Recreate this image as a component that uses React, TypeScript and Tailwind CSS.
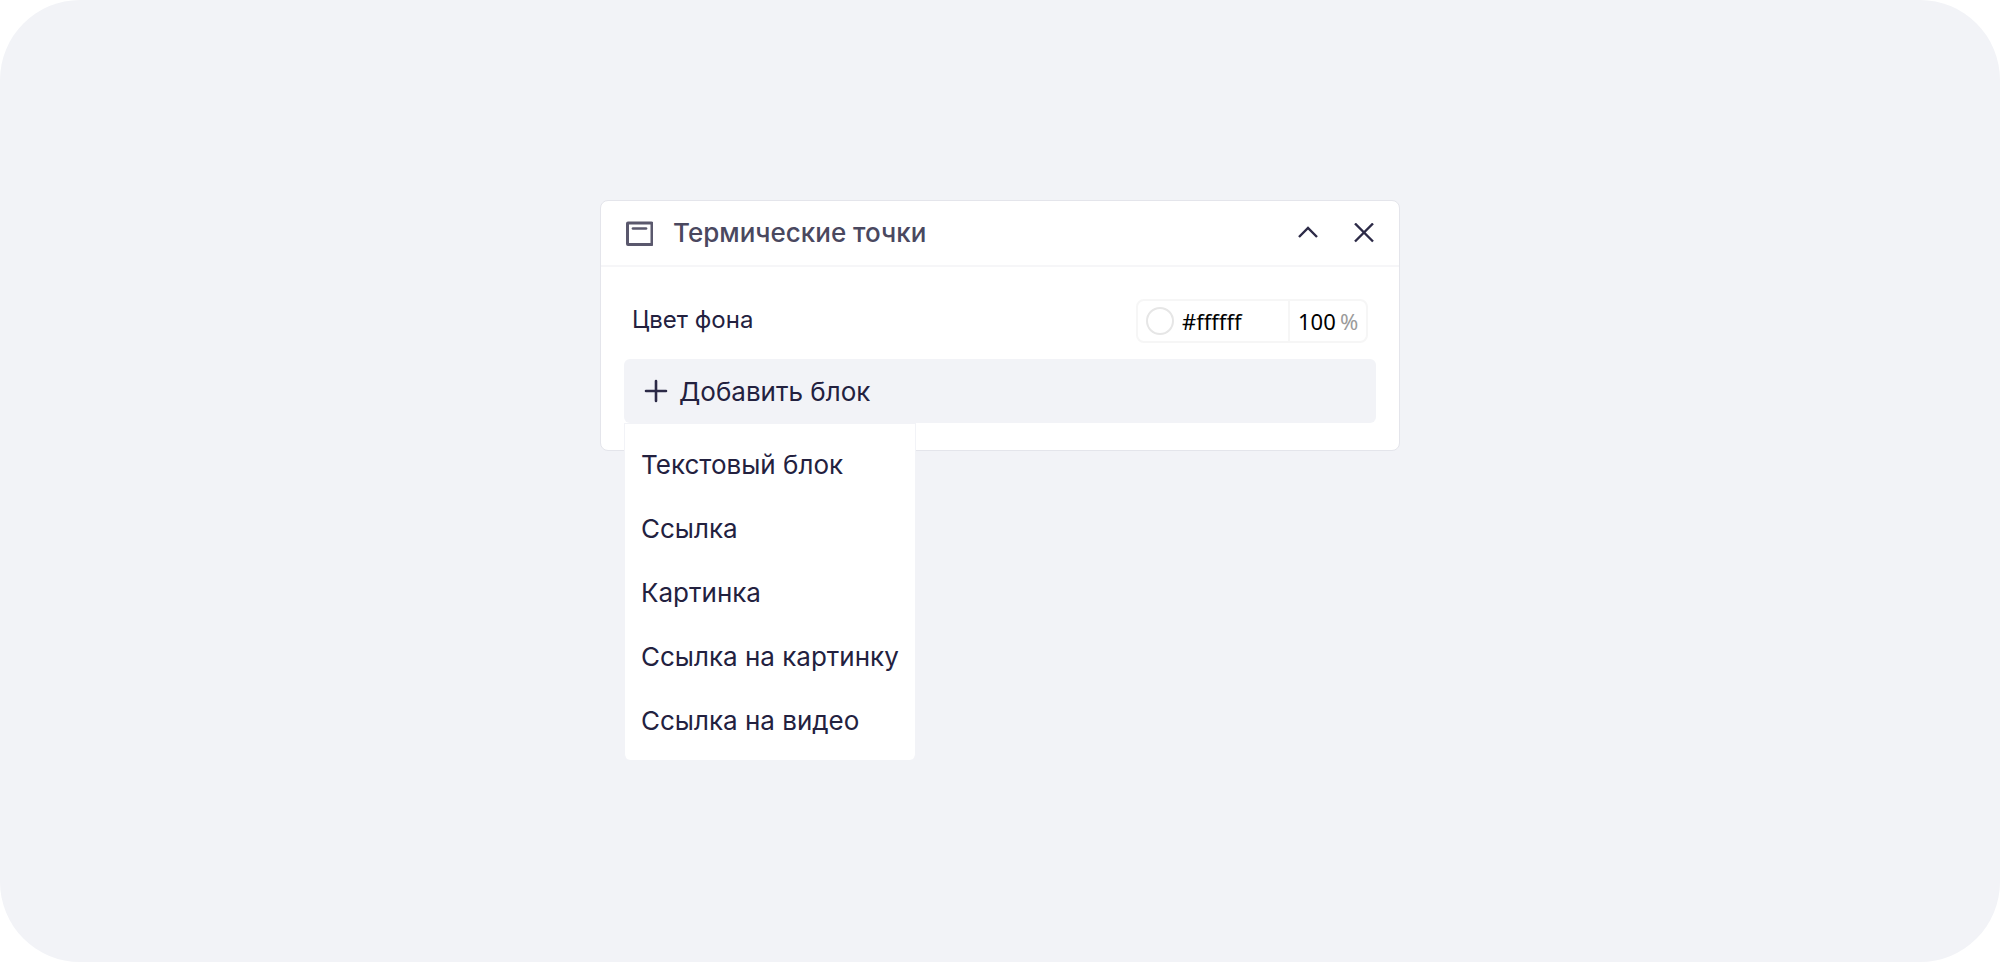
import { ChangeEvent, useState } from "react";

const blocks = [
  "Текстовый блок",
  "Ссылка",
  "Картинка",
  "Ссылка на картинку",
  "Ссылка на видео",
];

export default function App() {
  const [color, setColor] = useState("#ffffff");
  const [opacity, setOpacity] = useState("100");

  return (
    <main className="min-h-screen rounded-[80px] bg-[#f2f3f7] px-6 pt-50 font-['Inter','Liberation_Sans',sans-serif] text-[#23213f]">
      <section className="mx-auto max-w-[800px] rounded-lg border border-[#e4e5eb] bg-white pb-[27px]">
        <header className="flex h-[66px] items-center border-b-2 border-[#f6f6f8] pr-[25px] pl-6">
          <svg viewBox="0 0 28 26" className="h-[26px] w-7" fill="none" stroke="#5a586d" aria-hidden="true">
            <rect x="2.5" y="3" width="24.5" height="21.5" rx="0.5" strokeWidth="3" />
            <path d="M8 8.5h13" strokeWidth="2.7" strokeLinecap="round" />
          </svg>
          <h1 className="ml-5 text-[26px] leading-8 font-medium text-[#4a485f]">Термические точки</h1>
          <div className="ml-auto flex items-center gap-9">
            <button type="button" aria-label="Свернуть">
              <svg viewBox="0 0 20 20" className="size-5" fill="none" stroke="#2c2a47" strokeWidth="2.4" aria-hidden="true">
                <path d="M1 14l9-9 9 9" />
              </svg>
            </button>
            <button type="button" aria-label="Закрыть">
              <svg viewBox="0 0 20 20" className="size-5" fill="none" stroke="#2c2a47" strokeWidth="2.4" aria-hidden="true">
                <path d="M1 0.5l18 18M19 0.5L1 18.5" />
              </svg>
            </button>
          </div>
        </header>

        <div className="px-[23px] pt-8">
          <div className="flex items-center justify-between px-2">
            <label htmlFor="background" className="pb-[3px] text-2xl leading-8">Цвет фона</label>
            <div className="flex h-11 rounded-lg border-2 border-[#f6f6f6] font-['Noto_Sans',sans-serif] text-[22px] text-black">
              <div className="flex w-[150px] items-center gap-2 pl-2">
                <span className="size-7 rounded-full border-2 border-[#e6e6e6] bg-white" />
                <input
                  id="background"
                  className="w-24 bg-transparent outline-none"
                  value={color}
                  onChange={(e: ChangeEvent<HTMLInputElement>) => setColor(e.target.value)}
                />
              </div>
              <div className="flex w-[78px] items-center border-l-2 border-[#f6f6f6] pl-2">
                <input
                  id="opacity"
                  aria-label="Непрозрачность"
                  className="w-[42px] bg-transparent outline-none"
                  value={opacity}
                  onChange={(e: ChangeEvent<HTMLInputElement>) => setOpacity(e.target.value)}
                />
                <label htmlFor="opacity" className="text-[#9b9b9b]">%</label>
              </div>
            </div>
          </div>

          <div className="relative mt-4">
            <button type="button" aria-expanded="true" className="flex h-16 w-full items-center gap-[11px] rounded-md bg-[#f2f3f7] px-5 text-[26px]">
              <svg viewBox="0 0 24 24" className="size-6" fill="none" stroke="#2c2a47" strokeWidth="2.6" strokeLinecap="round" aria-hidden="true">
                <path d="M12 2v20M2 12h20" />
              </svg>
              Добавить блок
            </button>
            <ul className="absolute top-full left-0 rounded-b-md border-x border-t border-[#f2f3f7] bg-white pt-2 pb-2">
              {blocks.map((name) => (
                <li key={name}>
                  <button type="button" className="flex h-16 w-full items-center px-4 text-[26px] whitespace-nowrap">
                    {name}
                  </button>
                </li>
              ))}
            </ul>
          </div>
        </div>
      </section>
    </main>
  );
}
